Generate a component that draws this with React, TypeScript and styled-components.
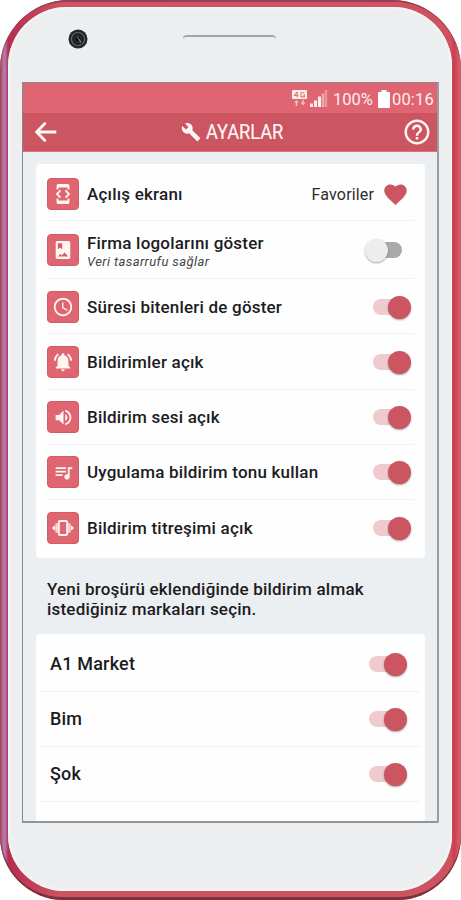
import React from "react";
import styled, { createGlobalStyle } from "styled-components";
import {
  MdBuild,
  MdDeveloperMode,
  MdFavorite,
  MdHelpOutline,
  MdNotificationsActive,
  MdQueueMusic,
  MdSchedule,
  MdVolumeUp,
} from "react-icons/md";

const Global = createGlobalStyle`
  * { box-sizing: border-box; }
  html, body { margin: 0; padding: 0; background: #fff; }
  body { font-family: Roboto, "Liberation Sans", sans-serif; color: #1c1c1e; }
  svg { display: block; flex: none; }
`;

const Case = styled.div`
  width: 461px;
  height: 900px;
  padding: 2px 1px 3px 1px;
  border-radius: 69px 69px 64px 64px;
  background: linear-gradient(90deg, #b64b5d 0, #b64b5d 3px, #ca6371 230px, #cf5260 455px, #dc6470 461px);
  box-shadow: inset 0 -3px 1px #7e303a, inset 0 2px 1px #943f54;
`;

const Rim = styled.div`
  height: 100%;
  padding: 5px 8px 6px 7px;
  border-radius: 66px 66px 61px 61px;
  background: linear-gradient(90deg, #b04c64 0, #b080b4 3px, #ad6c98 5px, #b52e50 7px, #ce5360 60px, #ce5360 450px, #c73f50 453px, #d85f6a 459px);
`;

const Face = styled.div`
  display: flex;
  flex-direction: column;
  height: 100%;
  padding: 0 14px;
  border-radius: 59px 59px 56px 56px;
  background: #eceef0;
  box-shadow: inset 0 0 3px 1px #fafafa;
`;

const Brow = styled.div`
  display: grid;
  grid-template-columns: 20px 93px;
  column-gap: 95px;
  padding: 22px 0 0 46px;
  height: 75px;
  flex: none;
`;

const Speaker = styled.div`
  height: 5px;
  margin-top: 6px;
  border-top: 2px solid #a2a4a5;
  border-radius: 4px 4px 0 0;
`;

const Screen = styled.main`
  display: flex;
  flex-direction: column;
  flex: none;
  width: 417px;
  height: 741px;
  overflow: hidden;
  border-style: solid;
  border-width: 1px 2px 2px 1px;
  border-color: #85888a #9b9ea0 #929597 #85888a;
  border-radius: 0 0 2px 0;
  background: #ebeff2;
`;

const StatusBar = styled.div`
  display: flex;
  align-items: center;
  justify-content: flex-end;
  flex: none;
  height: 30px;
  padding: 2px 3px 0 0;
  background: #de6571;
  color: #fff0ee;
  font-size: 16.5px;
`;

const Percent = styled.span`
  margin: 0 5px 0 5px;
`;

const Clock = styled.span`
  margin-left: 2px;
  letter-spacing: 0.2px;
`;

const AppBar = styled.header`
  display: grid;
  grid-template-columns: 30px 1fr 30px;
  align-items: center;
  flex: none;
  height: 39px;
  padding: 0 5px 0 7px;
  border-bottom: 1px solid #d9737d;
  background: #cb5560;
  color: #fff6f3;
`;

const Title = styled.h1`
  display: flex;
  align-items: center;
  justify-content: center;
  gap: 5px;
  margin: 0;
  padding-left: 1px;
  font-size: 20px;
  font-weight: 400;
`;

const TitleText = styled.span`
  display: block;
  transform: scaleX(0.91);
  transform-origin: left;
  margin-right: -8px;
  -webkit-text-stroke: 0.2px currentColor;
`;

const Body = styled.div`
  display: flex;
  flex-direction: column;
  flex: 1;
  min-height: 0;
  padding: 12px 12px 0 13px;
`;

const Card = styled.section<{ $inset: number; $height: number }>`
  flex: none;
  height: ${(p) => p.$height}px;
  padding: 0 ${(p) => p.$inset}px;
  border-radius: 4px;
  background: #fefefe;
`;

const Row = styled.div<{ $height: number; $top: number; $last?: boolean; $pad?: number }>`
  display: flex;
  align-items: flex-start;
  height: ${(p) => p.$height}px;
  padding: ${(p) => p.$top}px ${(p) => p.$pad ?? 3}px 0 ${(p) => (p.$pad ? 10 : 0)}px;
  border-bottom: ${(p) => (p.$last ? "none" : "1px solid #f0f2f3")};
`;

const Tile = styled.div`
  display: grid;
  place-items: center;
  flex: none;
  width: 32px;
  height: 32px;
  margin-right: 8px;
  border: 1px solid #cf5c67;
  border-radius: 4px;
  background: #df6570;
  color: #fff5f3;
`;

const Labels = styled.div<{ $drop?: number }>`
  display: flex;
  flex-direction: column;
  justify-content: center;
  flex: 1;
  height: 32px;
  margin-top: ${(p) => p.$drop ?? 0}px;
`;

const Label = styled.span<{ $size?: number }>`
  white-space: nowrap;
  font-size: ${(p) => p.$size ?? 17}px;
  line-height: 20px;
  font-weight: 500;
  letter-spacing: 0.2px;
`;

const Hint = styled.span`
  font-size: 13px;
  line-height: 18px;
  font-style: italic;
  letter-spacing: 0.4px;
  color: #444;
`;

const Choice = styled.div`
  display: flex;
  align-items: center;
  gap: 8px;
  height: 32px;
  margin-right: 2px;
  font-size: 16px;
  letter-spacing: 0.15px;
  color: #2c2c2e;
  svg { color: #cb5560; }
`;

const Track = styled.div<{ $on: boolean }>`
  display: flex;
  align-items: center;
  justify-content: ${(p) => (p.$on ? "flex-end" : "flex-start")};
  flex: none;
  width: 33px;
  height: 16px;
  margin: 8px ${(p) => (p.$on ? 5 : 9)}px 0 0;
  border-radius: 8px;
  background: ${(p) => (p.$on ? "#efcace" : "#a9a9a9")};
`;

const Knob = styled.div<{ $on: boolean }>`
  flex: none;
  width: 23px;
  height: 23px;
  margin: 0 ${(p) => (p.$on ? -5 : 0)}px 0 ${(p) => (p.$on ? 0 : -4)}px;
  border-radius: 50%;
  background: ${(p) => (p.$on ? "#cb5560" : "#ededed")};
  box-shadow: 0 1px 2px rgba(0, 0, 0, 0.35);
`;

const Notice = styled.p`
  flex: none;
  height: 76px;
  margin: 0;
  padding: 21px 0 0 11px;
  font-size: 17px;
  line-height: 20px;
  font-weight: 500;
  letter-spacing: 0.2px;
  white-space: nowrap;
`;

function Camera() {
  return (
    <svg width="20" height="20" viewBox="0 0 20 20">
      <circle cx="10" cy="10" r="9.5" fill="#242526" />
      <circle cx="10" cy="10" r="6.5" fill="#191a1b" stroke="#65686a" strokeWidth="1.2" />
      <circle cx="10" cy="10" r="3.4" fill="#070808" stroke="#404345" />
      <path d="M10.5 9.5l2.5 4" stroke="#8b8e90" strokeWidth="1.3" />
      <circle cx="9.7" cy="8.6" r=".8" fill="#8b8e90" />
    </svg>
  );
}

function NetworkIcon() {
  return (
    <svg width="36" height="18" viewBox="0 0 36 18" fill="#fff0ee">
      <rect x="0" y="0" width="15" height="9" rx="1" />
      <path d="M5 2L2.5 5.5h4M5.3 2v5.5M12.5 2.7H9v4.2h3.5V5H11" fill="none" stroke="#d87580" strokeWidth="1.1" />
      <path d="M2 12.5L4.5 10 7 12.5H5.3V16H3.7v-3.5zM8.5 12.5L11 15.5l2.5-3h-1.7V10h-1.6v2.5z" opacity=".65" />
      <rect x="18" y="13.5" width="3" height="3.5" />
      <rect x="22" y="10.5" width="3" height="6.5" />
      <rect x="26" y="6.5" width="3" height="10.5" />
      <rect x="29.7" y="3.5" width="2.6" height="13.5" opacity=".5" />
      <rect x="32.8" y="0" width="2.4" height="17" opacity=".38" />
    </svg>
  );
}

function BatteryIcon() {
  return (
    <svg width="12" height="18" viewBox="0 0 12 18">
      <path d="M3.5 0h5v2H11q1 0 1 1v14q0 1-1 1H1q-1 0-1-1V3q0-1 1-1h2.5z" fill="#fff" />
    </svg>
  );
}

function BackIcon() {
  return (
    <svg width="30" height="30" viewBox="0 0 30 30" fill="none" stroke="currentColor" strokeWidth="2.8">
      <path d="M26.3 15H7.5M15.6 5.8L6.6 15l9 9.2" />
    </svg>
  );
}

function AlbumIcon() {
  return (
    <svg width="16" height="18" viewBox="0 0 16 18">
      <rect x=".7" y="0" width="14.6" height="18" rx="1.8" fill="#fff5f3" />
      <path d="M2.8 2.2h4.4v6L5 6.7 2.8 8.2z" fill="#d65e69" />
      <path d="M3 15.5l2.3-2.5 1.6 1.5 2.6-3.2 3.6 4.2z" fill="#d65e69" />
    </svg>
  );
}

function VibrateIcon() {
  return (
    <svg width="24" height="20" viewBox="0 0 24 20">
      <path d="M1.6 10l2-2.2v4.4zM22.4 10l-2-2.2v4.4z" fill="#fff5f3" stroke="#fff5f3" strokeLinejoin="round" />
      <path d="M5.6 5.2v9.6M18.4 5.2v9.6" stroke="#fff5f3" strokeWidth="2.4" opacity=".75" />
      <rect x="7.8" y="3" width="8.4" height="14" rx="1.2" fill="#df6570" stroke="#fff5f3" strokeWidth="2" />
    </svg>
  );
}

function Switch({ on }: { on: boolean }) {
  return (
    <Track $on={on}>
      <Knob $on={on} />
    </Track>
  );
}

const settings = [
  { label: "Süresi bitenleri de göster", icon: <MdSchedule size={22} />, height: 55, top: 12 },
  { label: "Bildirimler açık", icon: <MdNotificationsActive size={22} />, height: 56, top: 12 },
  { label: "Bildirim sesi açık", icon: <MdVolumeUp size={21} />, height: 55, top: 11 },
  { label: "Uygulama bildirim tonu kullan", icon: <MdQueueMusic size={21} />, height: 55, top: 11 },
  { label: "Bildirim titreşimi açık", icon: <VibrateIcon />, height: 58, top: 12, last: true },
];

const brands = [
  { name: "A1 Market", height: 58, top: 14 },
  { name: "Bim", height: 55, top: 11 },
  { name: "Şok", height: 55, top: 11 },
];

export default function App() {
  return (
    <>
      <Global />
      <Case>
        <Rim>
          <Face>
            <Brow>
              <Camera />
              <Speaker />
            </Brow>
            <Screen>
              <StatusBar>
                <NetworkIcon />
                <Percent>100%</Percent>
                <BatteryIcon />
                <Clock>00:16</Clock>
              </StatusBar>
              <AppBar>
                <BackIcon />
                <Title>
                  <MdBuild size={20} />
                  <TitleText>AYARLAR</TitleText>
                </Title>
                <MdHelpOutline size={30} />
              </AppBar>
              <Body>
                <Card $inset={11} $height={394}>
                  <Row $height={57} $top={14}>
                    <Tile>
                      <MdDeveloperMode size={22} />
                    </Tile>
                    <Labels>
                      <Label>Açılış ekranı</Label>
                    </Labels>
                    <Choice>
                      Favoriler
                      <MdFavorite size={27} />
                    </Choice>
                  </Row>
                  <Row $height={58} $top={13}>
                    <Tile>
                      <AlbumIcon />
                    </Tile>
                    <Labels $drop={2}>
                      <Label>Firma logolarını göster</Label>
                      <Hint>Veri tasarrufu sağlar</Hint>
                    </Labels>
                    <Switch on={false} />
                  </Row>
                  {settings.map((s) => (
                    <Row key={s.label} $height={s.height} $top={s.top} $last={s.last}>
                      <Tile>{s.icon}</Tile>
                      <Labels>
                        <Label>{s.label}</Label>
                      </Labels>
                      <Switch on />
                    </Row>
                  ))}
                </Card>
                <Notice>
                  Yeni broşürü eklendiğinde bildirim almak
                  <br />
                  istediğiniz markaları seçin.
                </Notice>
                <Card $inset={4} $height={260}>
                  {brands.map((b) => (
                    <Row key={b.name} $height={b.height} $top={b.top} $pad={14}>
                      <Labels>
                        <Label $size={18}>{b.name}</Label>
                      </Labels>
                      <Switch on />
                    </Row>
                  ))}
                </Card>
              </Body>
            </Screen>
          </Face>
        </Rim>
      </Case>
    </>
  );
}
